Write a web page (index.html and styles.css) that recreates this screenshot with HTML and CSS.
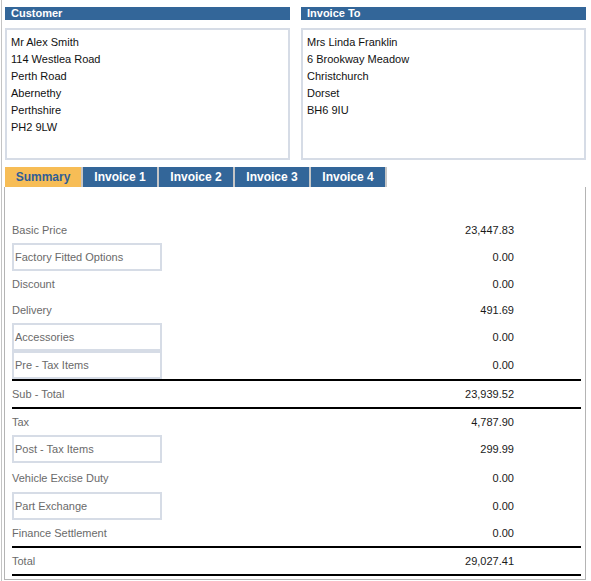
FILE: index.html
```html
<!DOCTYPE html>
<html>
<head>
<meta charset="utf-8">
<link rel="stylesheet" href="styles.css">
</head>
<body>
<div class="page">
  <div class="addresses">
    <section class="addr">
      <h2 class="addr-head">Customer</h2>
      <div class="addr-box">
        <div>Mr Alex Smith</div>
        <div>114 Westlea Road</div>
        <div>Perth Road</div>
        <div>Abernethy</div>
        <div>Perthshire</div>
        <div>PH2 9LW</div>
      </div>
    </section>
    <section class="addr">
      <h2 class="addr-head">Invoice To</h2>
      <div class="addr-box">
        <div>Mrs Linda Franklin</div>
        <div>6 Brookway Meadow</div>
        <div>Christchurch</div>
        <div>Dorset</div>
        <div>BH6 9IU</div>
      </div>
    </section>
  </div>

  <nav class="tabs">
    <div class="tab active">Summary</div>
    <div class="tab">Invoice 1</div>
    <div class="tab">Invoice 2</div>
    <div class="tab">Invoice 3</div>
    <div class="tab">Invoice 4</div>
  </nav>

  <div class="panel">
    <div class="row"><span class="label">Basic Price</span><span class="value">23,447.83</span></div>
    <div class="row boxed"><span class="label">Factory Fitted Options</span><span class="value">0.00</span></div>
    <div class="row"><span class="label">Discount</span><span class="value">0.00</span></div>
    <div class="row"><span class="label">Delivery</span><span class="value">491.69</span></div>
    <div class="row boxed"><span class="label">Accessories</span><span class="value">0.00</span></div>
    <div class="row boxed"><span class="label">Pre - Tax Items</span><span class="value">0.00</span></div>
    <div class="rule"></div>
    <div class="row"><span class="label">Sub - Total</span><span class="value">23,939.52</span></div>
    <div class="rule"></div>
    <div class="row"><span class="label">Tax</span><span class="value">4,787.90</span></div>
    <div class="row boxed"><span class="label">Post - Tax Items</span><span class="value">299.99</span></div>
    <div class="row tall"><span class="label">Vehicle Excise Duty</span><span class="value">0.00</span></div>
    <div class="row boxed"><span class="label">Part Exchange</span><span class="value">0.00</span></div>
    <div class="row"><span class="label">Finance Settlement</span><span class="value">0.00</span></div>
    <div class="rule"></div>
    <div class="row"><span class="label">Total</span><span class="value">29,027.41</span></div>
    <div class="rule"></div>
  </div>
</div>
</body>
</html>
```

FILE: styles.css
```css
* { box-sizing: border-box; }

html, body {
  margin: 0;
  padding: 0;
  background: #ffffff;
}

body {
  font-family: "Liberation Sans", Arial, sans-serif;
  font-size: 11px;
  color: #1a1a1a;
}

.page {
  width: 591px;
  height: 581px;
  margin-left: 1px;
  border-left: 1px solid #c4c4c4;
  padding: 7px 4px 0 3px;
}

.addresses {
  display: flex;
  gap: 11px;
}

.addr {
  width: 285px;
}

.addr-head {
  margin: 0;
  background: #336699;
  color: #ffffff;
  font-size: 11px;
  font-weight: bold;
  line-height: 13px;
  height: 13px;
  padding-left: 6px;
}

.addr-box {
  margin-top: 8px;
  height: 132px;
  border: 2px solid #d6dce6;
  padding: 4px 4px 0 4px;
  line-height: 17px;
  color: #111111;
}

.tabs {
  display: flex;
  margin-top: 7px;
  height: 20px;
}

.tab {
  width: 76px;
  height: 20px;
  line-height: 20px;
  background: #336699;
  color: #ffffff;
  font-size: 12px;
  font-weight: bold;
  text-align: center;
  border-right: 2px solid #c6c6c6;
}

.tab.active {
  width: 78px;
  background: #f7bd56;
  color: #2f5d96;
}

.panel {
  margin-left: -1px;
  width: 582px;
  height: 393px;
  border: 1px solid #b4b4b4;
  border-top: none;
  padding: 30px 4px 0 7px;
}

.row {
  display: flex;
  align-items: center;
  justify-content: space-between;
  height: 26px;
}

.row.tall {
  height: 29px;
}

.label {
  color: #6a6a6a;
}

.value {
  color: #1a1a1a;
  padding-right: 67px;
}

.row.boxed {
  height: 28px;
}

.row.boxed .label {
  width: 150px;
  height: 28px;
  line-height: 24px;
  border: 2px solid #d6dce6;
  padding-left: 1px;
}

.rule {
  height: 2px;
  background: #000000;
}
```
